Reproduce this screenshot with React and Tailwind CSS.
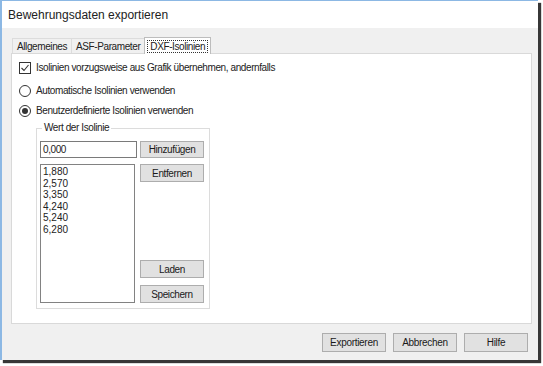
import React from "react";

const werte = ["1,880", "2,570", "3,350", "4,240", "5,240", "6,280"];

function Knopf({ children, className = "" }) {
  return (
    <div
      className={
        "flex items-center justify-center bg-[#e1e1e1] border border-[#adadad] text-[10px] text-[#1a1a1a] " +
        className
      }
    >
      {children}
    </div>
  );
}

function Radio({ checked }) {
  return (
    <div className="w-[12px] h-[12px] rounded-full border border-[#333] bg-white flex items-center justify-center shrink-0">
      {checked && <div className="w-[6px] h-[6px] rounded-full bg-[#333]" />}
    </div>
  );
}

export default function App() {
  return (
    <div className="w-[543px] h-[366px] bg-white font-['Liberation_Sans',sans-serif] overflow-hidden">
      <div className="w-[538px] h-[360px] flex flex-col bg-[#f0f0f0] border-l-2 border-t border-[#8cb8e4] shadow-[3px_3px_1px_rgba(20,20,20,0.85)]">
        {/* Titelleiste */}
        <div className="h-[27px] bg-white flex items-center pl-[6px] text-[12px] text-[#222]">
          Bewehrungsdaten exportieren
        </div>

        {/* Reiter */}
        <div className="flex items-end pl-[10px] h-[25px] tracking-[-0.4px]">
          <div className="h-[15px] px-[4px] flex items-center text-[10px] text-[#222] border-t border-l border-[#dcdcdc]">
            Allgemeines
          </div>
          <div className="h-[15px] px-[4px] flex items-center text-[10px] text-[#222] border-t border-l border-[#dcdcdc]">
            ASF-Parameter
          </div>
          <div className="h-[17px] px-[2px] flex items-center bg-white border border-b-0 border-[#bdbdbd] -mb-px relative z-10">
            <div className="px-[2px] text-[10px] text-[#222] border border-dotted border-[#333] leading-[11px]">
              DXF-Isolinien
            </div>
          </div>
        </div>

        {/* Seite */}
        <div className="ml-[9px] w-[521px] h-[271px] bg-white border border-[#d9d9d9] pl-[7px] pt-[7px] text-[10px] text-[#222] tracking-[-0.4px]">
          <div className="flex items-center gap-[5px] h-[13px]">
            <div className="w-[12px] h-[12px] border border-[#333] bg-white flex items-center justify-center shrink-0">
              <svg width="10" height="10" viewBox="0 0 10 10">
                <path d="M1.5 5 L4 7.5 L8.5 2" fill="none" stroke="#333" strokeWidth="1.1" />
              </svg>
            </div>
            <span>Isolinien vorzugsweise aus Grafik übernehmen, andernfalls</span>
          </div>
          <div className="flex items-center gap-[5px] h-[13px] mt-[10px]">
            <Radio />
            <span>Automatische Isolinien verwenden</span>
          </div>
          <div className="flex items-center gap-[5px] h-[13px] mt-[7px]">
            <Radio checked />
            <span>Benutzerdefinierte Isolinien verwenden</span>
          </div>

          {/* Gruppe */}
          <div className="relative ml-[17px] mt-[11px] w-[174px] h-[181px] border border-[#dcdcdc] pl-[3px] pt-[12px]">
            <span className="absolute left-[5px] -top-[7px] bg-white px-[2px] leading-[12px]">
              Wert der Isolinie
            </span>
            <div className="flex gap-[3px]">
              <div className="w-[97px] h-[17px] border border-[#7a7a7a] bg-white flex items-center pl-[2px]">
                0,000
              </div>
              <Knopf className="w-[64px] h-[17px]">Hinzufügen</Knopf>
            </div>
            <div className="flex gap-[5px] mt-[6px]">
              <div className="w-[95px] h-[139px] border border-[#828282] bg-white pl-[2px] pt-[1px] leading-[11.6px] tracking-normal">
                {werte.map((w) => (
                  <div key={w}>{w}</div>
                ))}
              </div>
              <div className="flex flex-col w-[64px]">
                <Knopf className="h-[18px]">Entfernen</Knopf>
                <Knopf className="h-[18px] mt-auto">Laden</Knopf>
                <Knopf className="h-[18px] mt-[7px]">Speichern</Knopf>
              </div>
            </div>
          </div>
        </div>

        {/* Fusszeile */}
        <div className="flex justify-end gap-[7px] pr-[10px] mt-[9px] tracking-[-0.3px]">
          <Knopf className="w-[64px] h-[19px]">Exportieren</Knopf>
          <Knopf className="w-[64px] h-[19px]">Abbrechen</Knopf>
          <Knopf className="w-[64px] h-[19px]">Hilfe</Knopf>
        </div>
      </div>
    </div>
  );
}
